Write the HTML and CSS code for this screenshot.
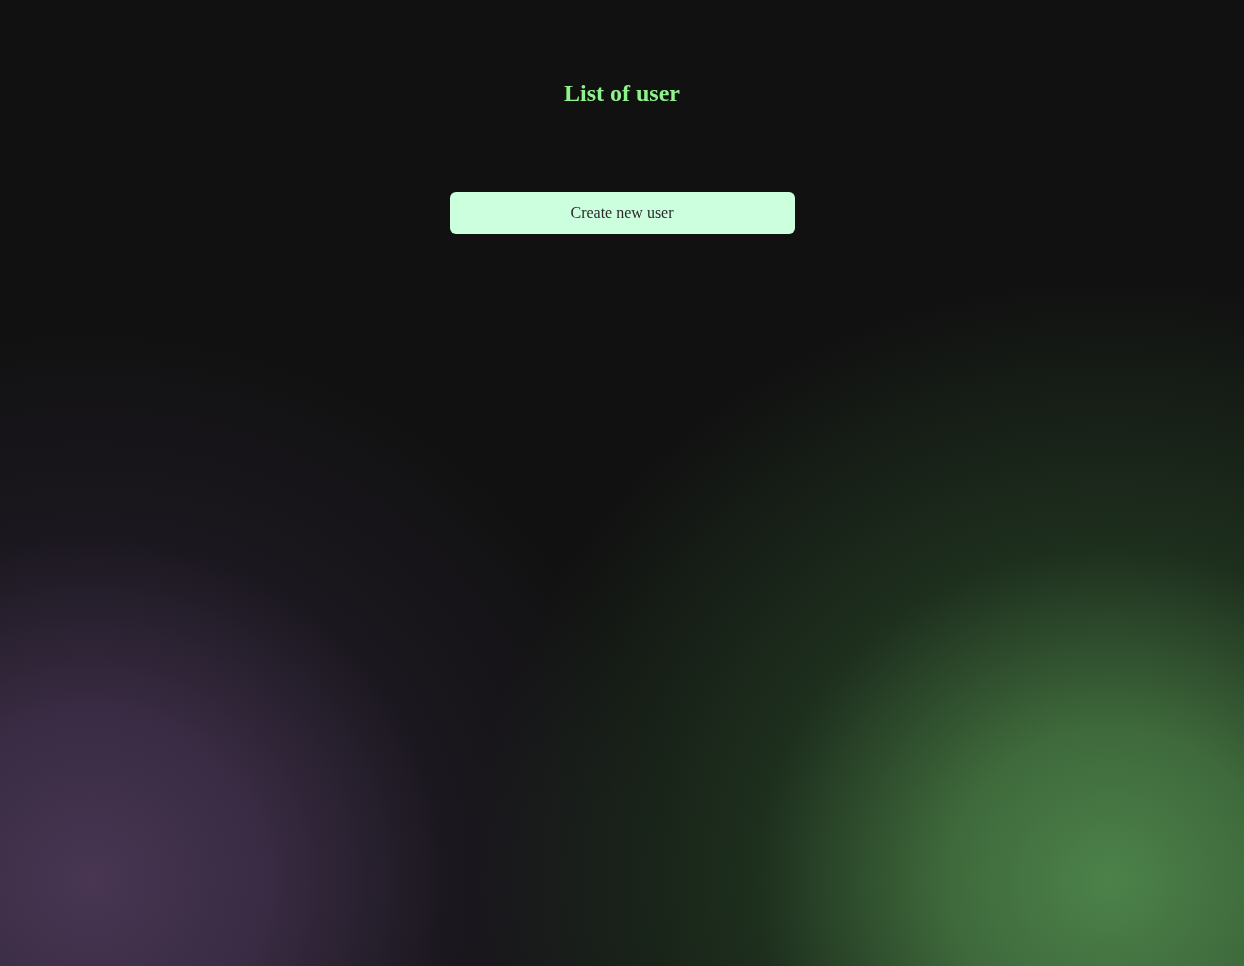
FILE: index.html
```html
<!DOCTYPE html>
<html>
<head>
<meta charset="utf-8">
<link rel="stylesheet" href="styles.css">
</head>
<body>
<div class="bg"></div>
<main class="page">
  <h2 class="title">List of user</h2>
  <button class="create-btn">Create new user</button>
</main>
</body>
</html>
```
FILE: styles.css
```css
html, body {
  margin: 0;
  padding: 0;
  height: 100%;
}
body {
  background: #111111;
  font-family: "Liberation Serif", "Times New Roman", serif;
  overflow: hidden;
}
.bg {
  position: fixed;
  inset: 0;
  background:
    radial-gradient(ellipse 640px 600px at 1110px 880px, rgba(76,130,74,1) 0%, rgba(68,116,64,0.9) 25%, rgba(40,72,40,0.55) 55%, rgba(17,17,17,0) 100%),
    radial-gradient(ellipse 580px 560px at 90px 880px, rgba(72,54,82,1) 0%, rgba(64,48,76,0.85) 30%, rgba(36,29,44,0.5) 62%, rgba(17,17,17,0) 100%),
    #111111;
  z-index: 0;
}
.page {
  position: relative;
  z-index: 1;
  display: flex;
  flex-direction: column;
  align-items: center;
  padding-top: 61px;
}
.title {
  margin: 18px 0 0;
  font-size: 24px;
  font-weight: bold;
  color: #8ff28c;
  line-height: 28px;
}
.create-btn {
  margin-top: 85px;
  width: 345px;
  height: 42px;
  border: none;
  border-radius: 6px;
  background: #ccffdd;
  color: #2a2a2a;
  font-family: "Liberation Serif", "Times New Roman", serif;
  font-size: 16px;
  cursor: pointer;
}
```
